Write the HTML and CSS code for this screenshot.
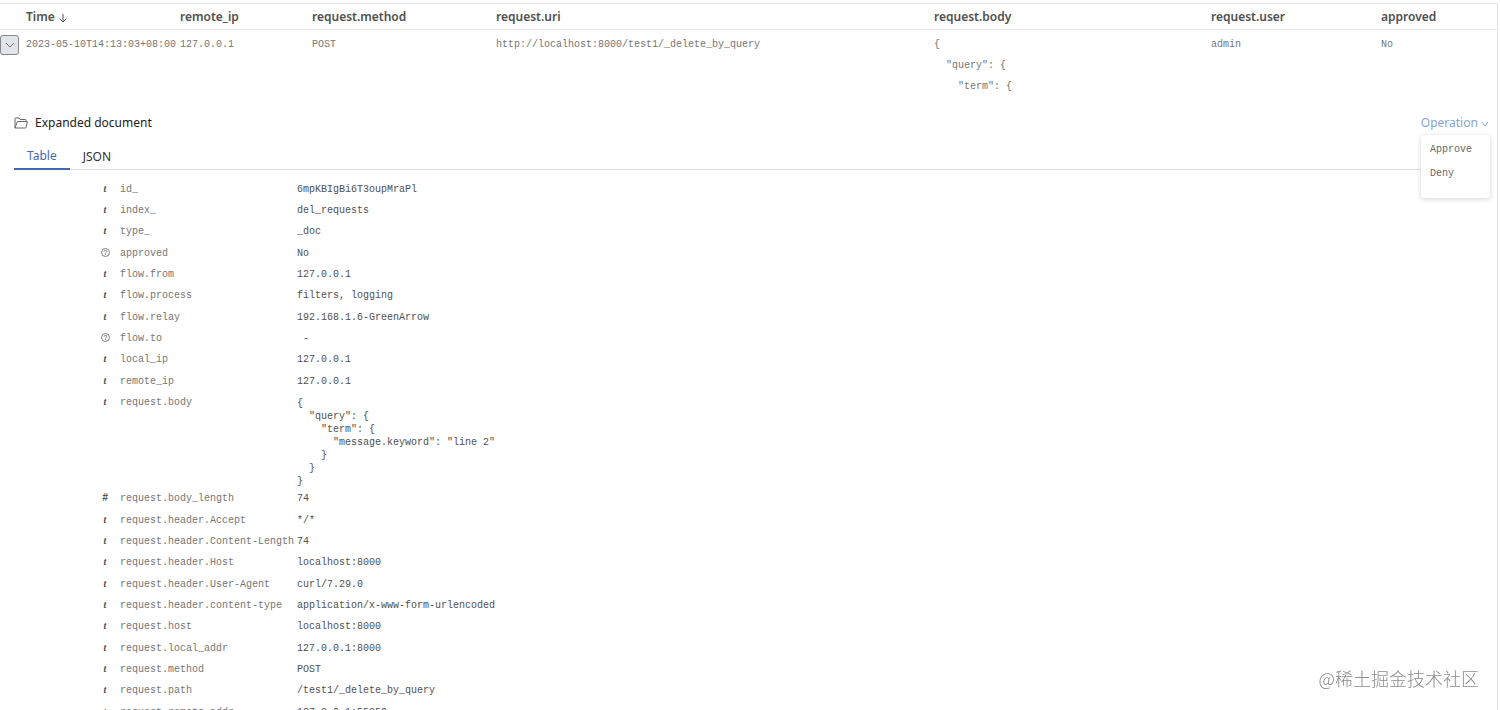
FILE: index.html
```
<!DOCTYPE html>
<html lang="en">
<head>
    <meta charset="UTF-8">
    <title>Delete requests</title>
    <meta name="viewport" content="width=device-width, initial-scale=1.0">
    <link rel="stylesheet" href="styles.css">
</head>
<body>
    <div class="page">
        <table class="doc-table">
            <colgroup>
                <col class="col-toggle">
                <col class="col-time">
                <col class="col-ip">
                <col class="col-method">
                <col class="col-uri">
                <col class="col-body">
                <col class="col-user">
                <col class="col-approved">
            </colgroup>
            <thead>
                <tr>
                    <th></th>
                    <th>Time
                        <svg class="sort-icon" width="10" height="10" viewBox="0 0 10 10"><path d="M5 1v8M1.5 5.5L5 9l3.5-3.5"/></svg>
                    </th>
                    <th>remote_ip</th>
                    <th>request.method</th>
                    <th>request.uri</th>
                    <th>request.body</th>
                    <th>request.user</th>
                    <th>approved</th>
                </tr>
            </thead>
            <tbody>
                <tr class="doc-row">
                    <td class="toggle-cell">
                        <button type="button" class="toggle" aria-label="Toggle row details">
                            <svg width="10" height="6" viewBox="0 0 10 6"><path d="M1 1l4 4 4-4"/></svg>
                        </button>
                    </td>
                    <td>2023-05-10T14:13:03+08:00</td>
                    <td>127.0.0.1</td>
                    <td>POST</td>
                    <td>http://localhost:8000/test1/_delete_by_query</td>
                    <td class="source">{
  "query": {
    "term": {</td>
                    <td>admin</td>
                    <td>No</td>
                </tr>
            </tbody>
        </table>

        <div class="detail">
            <div class="detail-header">
                <svg class="folder-icon" width="14" height="12" viewBox="0 0 14 12"><path d="M1 11V1.500q0-.5.5-.5H5l1.200 1.500h5.300q.5 0 .5.5v1.500M1 11l2.200-6q.2-.5.6-.5h9.200q.5 0 .4.500L12 10.500q-.2.500-.6.500z"/></svg>
                <h2>Expanded document</h2>
                <div class="operation">
                    <button type="button" class="operation-button">Operation
                        <svg width="8" height="6" viewBox="0 0 8 6"><path d="M1 1l3 4 3-4"/></svg>
                    </button>
                    <div class="menu">
                        <button type="button">Approve</button>
                        <button type="button">Deny</button>
                    </div>
                </div>
            </div>

            <div class="tabs">
                <button type="button" class="tab active">Table</button>
                <button type="button" class="tab">JSON</button>
            </div>

            <table class="fields">
                <tbody>
                    <tr><td class="type">t</td><th>id_</th><td>6mpKBIgBi6T3oupMraPl</td></tr>
                    <tr><td class="type">t</td><th>index_</th><td>del_requests</td></tr>
                    <tr><td class="type">t</td><th>type_</th><td>_doc</td></tr>
                    <tr>
                        <td class="type"><svg class="unknown" width="9" height="9" viewBox="0 0 9 9"><circle cx="4.500" cy="4.500" r="4"/><path d="M3.200 3.600q0-1.200 1.300-1.200t1.300 1.100q0 .6-.7 1t-.6.900M4.500 6.200v.8"/></svg></td>
                        <th>approved</th><td>No</td>
                    </tr>
                    <tr><td class="type">t</td><th>flow.from</th><td>127.0.0.1</td></tr>
                    <tr><td class="type">t</td><th>flow.process</th><td>filters, logging</td></tr>
                    <tr><td class="type">t</td><th>flow.relay</th><td>192.168.1.6-GreenArrow</td></tr>
                    <tr>
                        <td class="type"><svg class="unknown" width="9" height="9" viewBox="0 0 9 9"><circle cx="4.500" cy="4.500" r="4"/><path d="M3.200 3.600q0-1.200 1.300-1.200t1.300 1.100q0 .6-.7 1t-.6.900M4.500 6.200v.8"/></svg></td>
                        <th>flow.to</th><td class="empty">-</td>
                    </tr>
                    <tr><td class="type">t</td><th>local_ip</th><td>127.0.0.1</td></tr>
                    <tr><td class="type">t</td><th>remote_ip</th><td>127.0.0.1</td></tr>
                    <tr>
                        <td class="type">t</td><th>request.body</th>
                        <td class="json">{
  "query": {
    "term": {
      "message.keyword": "line 2"
    }
  }
}</td>
                    </tr>
                    <tr><td class="type hash">#</td><th>request.body_length</th><td>74</td></tr>
                    <tr><td class="type">t</td><th>request.header.Accept</th><td>*/*</td></tr>
                    <tr><td class="type">t</td><th>request.header.Content-Length</th><td>74</td></tr>
                    <tr><td class="type">t</td><th>request.header.Host</th><td>localhost:8000</td></tr>
                    <tr><td class="type">t</td><th>request.header.User-Agent</th><td>curl/7.29.0</td></tr>
                    <tr><td class="type">t</td><th>request.header.content-type</th><td>application/x-www-form-urlencoded</td></tr>
                    <tr><td class="type">t</td><th>request.host</th><td>localhost:8000</td></tr>
                    <tr><td class="type">t</td><th>request.local_addr</th><td>127.0.0.1:8000</td></tr>
                    <tr><td class="type">t</td><th>request.method</th><td>POST</td></tr>
                    <tr><td class="type">t</td><th>request.path</th><td>/test1/_delete_by_query</td></tr>
                    <tr><td class="type">t</td><th>request.remote_addr</th><td>127.0.0.1:55952</td></tr>
                </tbody>
            </table>
        </div>
    </div>
    <div class="watermark">@稀土掘金技术社区</div>
</body>
</html>
```
FILE: styles.css
```
* {
    box-sizing: border-box;
}

body {
    margin: 0;
    background: #fff;
    color: #343741;
    font-family: "Noto Sans", "Open Sans", sans-serif;
    font-size: 12px;
}

button {
    padding: 0;
    border: none;
    background: none;
    color: inherit;
    font: inherit;
    cursor: pointer;
}

svg {
    fill: none;
    stroke: currentColor;
}

.page {
    height: calc(100vh - 3px);
    margin: 3px 2px 0 0;
    overflow: hidden;
    border-top: 1px solid #e6e6ea;
    border-right: 1px solid #e2e2e8;
}

.doc-table {
    width: 100%;
    table-layout: fixed;
    border-collapse: collapse;
}

.col-toggle {
    width: 22px;
}

.col-time {
    width: 154px;
}

.col-ip {
    width: 132px;
}

.col-method {
    width: 184px;
}

.col-body {
    width: 277px;
}

.col-user {
    width: 170px;
}

.col-approved {
    width: 120px;
}

.doc-table th {
    height: 25px;
    padding: 0 4px;
    border-bottom: 1px solid #ebebef;
    color: #505050;
    font-weight: 600;
    text-align: left;
    white-space: nowrap;
}

.sort-icon {
    vertical-align: -2px;
}

.doc-row td {
    padding: 4px 0 4px 4px;
    color: #757575;
    font-family: "Liberation Mono", monospace;
    font-size: 10px;
    line-height: 21px;
    vertical-align: top;
    white-space: nowrap;
}

.doc-row .source {
    white-space: pre;
}

.doc-row .toggle-cell {
    padding: 5px 0;
}

.toggle {
    display: flex;
    align-items: center;
    justify-content: center;
    width: 19px;
    height: 20px;
    border: 1px solid #85878d;
    border-radius: 3px;
    background: #e1e4e9;
}

.detail {
    padding: 10px 8px 0 14px;
}

.detail-header {
    display: flex;
    align-items: center;
    height: 24px;
}

.folder-icon {
    color: #666;
}

.detail-header h2 {
    margin: 0 0 0 7px;
    color: #222;
    font-size: 12px;
    font-weight: 400;
}

.operation {
    position: relative;
    margin-left: auto;
}

.operation-button {
    color: #86a6d4;
}

.menu {
    position: absolute;
    top: 100%;
    right: -1px;
    display: flex;
    flex-direction: column;
    align-items: flex-start;
    width: 69px;
    margin-top: 4px;
    padding: 3px 9px 12px;
    border-radius: 3px;
    background: #fff;
    box-shadow: 0 1px 5px rgba(0, 0, 0, 0.18);
    color: #666;
    font-family: "Liberation Mono", monospace;
    font-size: 10px;
    line-height: 24px;
}

.tabs {
    display: flex;
    height: 35px;
    border-bottom: 1px solid #dfe1e6;
}

.tab {
    height: 35px;
    padding: 8px 13px 0;
    color: #333;
}

.tab.active {
    border-bottom: 2px solid #3d6aa8;
    color: #4668b0;
}

.fields {
    margin: 9px 0 0 82px;
    border-collapse: collapse;
    font-family: "Liberation Mono", monospace;
    font-size: 10px;
    line-height: 21px;
}

.fields th,
.fields td {
    height: 21px;
    padding: 0;
    vertical-align: top;
    text-align: left;
    white-space: nowrap;
}

.fields tr:nth-child(3n) td {
    height: 22px;
}

.fields th {
    width: 177px;
    color: #757575;
    font-weight: 400;
}

.fields td {
    padding-top: 1px;
    color: #505050;
    line-height: 20px;
}

.fields .type {
    width: 24px;
    padding: 0 6px 0 0;
    font-family: "Liberation Serif", serif;
    font-style: italic;
    font-weight: 700;
    text-align: center;
}

.fields .hash {
    font-family: "Liberation Sans", sans-serif;
}

.unknown {
    vertical-align: -1px;
    stroke-width: 0.7;
}

.fields .empty {
    padding-left: 6px;
}

.fields .json {
    padding: 5px 0 0;
    line-height: 13px;
    white-space: pre;
}

.watermark {
    position: fixed;
    right: 21px;
    bottom: 19px;
    color: #8c8c8c;
    font-family: "Noto Sans CJK SC", sans-serif;
    font-size: 18px;
    font-weight: 300;
    text-shadow: 0 0 2px #fff;
}
```
